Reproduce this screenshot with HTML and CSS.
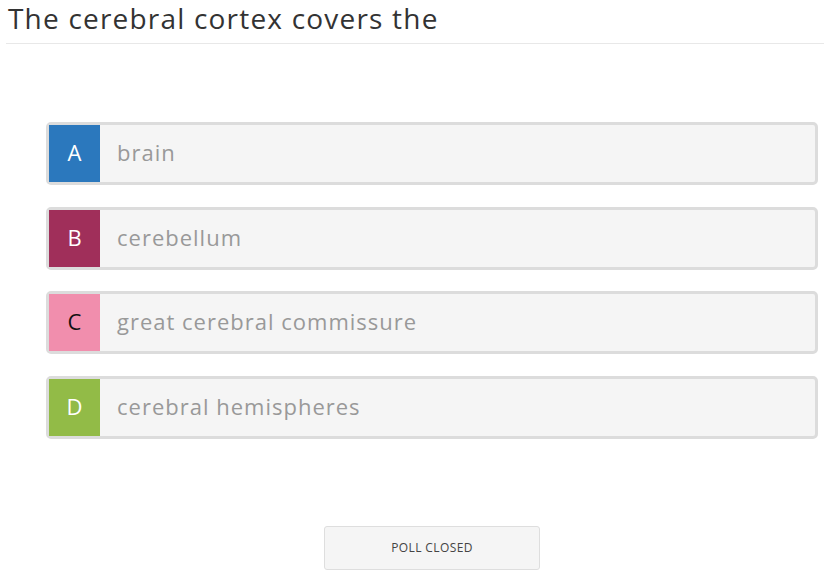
FILE: index.html
```html
<!DOCTYPE html>
<html lang="en">
<head>
  <meta charset="UTF-8" />
  <title>Poll</title>
  <link rel="stylesheet" href="styles.css">
</head>
<body>
  <header class="pregunta">
    <h1>The cerebral cortex covers the</h1>
  </header>

  <main>
    <ul class="opciones">
      <li class="opcion">
        <span class="letra letra-a">A</span>
        <span class="texto">brain</span>
      </li>
      <li class="opcion">
        <span class="letra letra-b">B</span>
        <span class="texto">cerebellum</span>
      </li>
      <li class="opcion">
        <span class="letra letra-c">C</span>
        <span class="texto">great cerebral commissure</span>
      </li>
      <li class="opcion">
        <span class="letra letra-d">D</span>
        <span class="texto">cerebral hemispheres</span>
      </li>
    </ul>

    <div class="acciones">
      <button class="cerrado">POLL CLOSED</button>
    </div>
  </main>
</body>
</html>
```

FILE: styles.css
```css
body {
  font-family: "Open Sans", Lato, sans-serif;
  margin: 0;
  padding: 0;
  background: #fff;
  color: #333;
}
.pregunta {
  margin: 0 0 0 6px;
  border-bottom: 1px solid #e8e8e8;
  height: 43px;
}
.pregunta h1 {
  margin: 0;
  padding: 0 0 0 2px;
  font-size: 28px;
  font-weight: 400;
  line-height: 36px;
  letter-spacing: 1.2px;
  color: #333;
}
main {
  padding: 78px 6px 0 46px;
}
.opciones {
  list-style: none;
  margin: 0;
  padding: 0;
  display: flex;
  flex-direction: column;
  gap: 21.5px;
}
.opcion {
  display: flex;
  align-items: stretch;
  height: 57px;
  border: 3px solid #dcdcdc;
  border-radius: 5px;
  background: #f5f5f5;
}
.letra {
  width: 51px;
  display: flex;
  align-items: center;
  justify-content: center;
  padding-bottom: 3px;
  font-size: 22px;
  color: #fff;
}
.letra-a { background: #2b78bd; }
.letra-b { background: #a02f5a; }
.letra-c { background: #f18ead; color: #111; }
.letra-d { background: #92bb47; }
.texto {
  display: flex;
  align-items: center;
  padding: 0 0 3px 17px;
  font-size: 22px;
  letter-spacing: 1px;
  color: #999;
}
.acciones {
  display: flex;
  justify-content: center;
  padding: 87px 0 0 0;
}
.cerrado {
  width: 216px;
  height: 44px;
  background: #f5f5f5;
  border: 1px solid #dedede;
  border-radius: 3px;
  font-family: inherit;
  font-size: 12px;
  letter-spacing: 0.4px;
  color: #444;
}
```
